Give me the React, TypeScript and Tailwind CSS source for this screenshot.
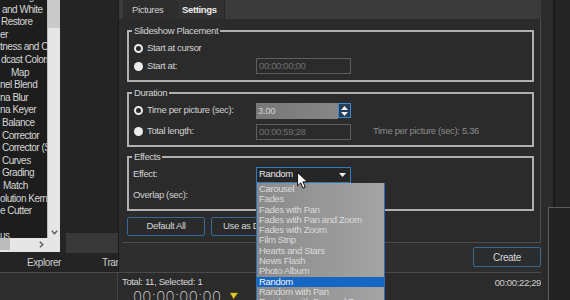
import React from "react";

const listRows: { t: string; c: string }[] = [
  { t: "ing", c: "pl-[22px]" },
  { t: "and White", c: "pl-[2px]" },
  { t: "Restore", c: "pl-[1px]" },
  { t: "er", c: "pl-0" },
  { t: "tness and Co", c: "pl-0" },
  { t: "dcast Colors", c: "pl-[1px]" },
  { t: "Map", c: "pl-[11px]" },
  { t: "nel Blend", c: "pl-0" },
  { t: "na Blur", c: "pl-0" },
  { t: "na Keyer", c: "pl-0" },
  { t: "Balance", c: "pl-[2px]" },
  { t: "Corrector", c: "pl-[2px]" },
  { t: "Corrector (S", c: "pl-[2px]" },
  { t: "Curves", c: "pl-[2px]" },
  { t: "Grading", c: "pl-[2px]" },
  { t: "Match", c: "pl-[3px]" },
  { t: "olution Kerne", c: "pl-0" },
  { t: "e Cutter", c: "pl-0" },
  { t: "", c: "pl-0" },
  { t: "us", c: "pl-0" },
];

const effects = [
  "Carousel",
  "Fades",
  "Fades with Pan",
  "Fades with Pan and Zoom",
  "Fades with Zoom",
  "Film Strip",
  "Hearts and Stars",
  "News Flash",
  "Photo Album",
  "Random",
  "Random with Pan",
  "Random with Pan and Zoom",
];

function Radio({ filled }: { filled: boolean }) {
  return filled ? (
    <span className="block w-[9px] h-[9px] shrink-0 rounded-full bg-[#ececec]" />
  ) : (
    <span className="block w-[9px] h-[9px] shrink-0 rounded-full border-2 border-[#ececec] bg-[#2b2b2b]" />
  );
}

function Group({
  title,
  extra,
  children,
}: {
  title: string;
  extra: string;
  children: React.ReactNode;
}) {
  return (
    <fieldset className={"ml-[5px] mr-[6px] border-2 border-[#b0b0b0] " + extra}>
      <legend className="ml-[3px] px-[2px] leading-[12px] text-[#d2d2d2] bg-[#2b2b2b]">
        {title}
      </legend>
      {children}
    </fieldset>
  );
}

export default function App() {
  return (
    <div className="w-[570px] h-[300px] bg-[#242424] overflow-hidden relative flex font-['Liberation_Sans',Arial,sans-serif] text-[9.5px] tracking-[-0.35px] text-[#d2d2d2]">
      {/* main column */}
      <div className="w-[541px] h-[300px] flex flex-col">
        {/* top */}
        <div className="h-[272px] flex">
          {/* left column */}
          <div className="w-[118px] flex flex-col">
            <div className="h-[252px] flex">
              {/* list frame */}
              <div className="w-[60px] h-[252px] bg-[#e4e4e4] flex flex-col">
                <div className="h-[238px] flex">
                  <div className="w-[47px] h-[238px] bg-[#1d1d1d] overflow-hidden">
                    <div className="mt-[-9px]">
                      {listRows.map((r, i) => (
                        <div
                          key={i}
                          className={"h-[12.6px] leading-[12.6px] whitespace-nowrap text-[10px] tracking-[-0.5px] text-[#d6d6d6] " + r.c}
                        >
                          {r.t}
                        </div>
                      ))}
                    </div>
                  </div>
                  <div className="w-[13px] flex flex-col border-l border-[#bdbdbd]">
                    <div className="h-[28px] bg-[#cacaca]" />
                    <div className="flex-1 bg-[#e6e6e6] flex flex-col justify-end items-center pb-[3px]">
                      <svg width="7" height="5" viewBox="0 0 7 5">
                        <path d="M0.8 0.8 L3.5 3.8 L6.2 0.8" stroke="#555" strokeWidth="1.3" fill="none" />
                      </svg>
                    </div>
                  </div>
                </div>
                <div className="h-[12px] flex items-center bg-[#e6e6e6]">
                  <div className="w-[10px] h-[12px] bg-[#bcbcbc]" />
                  <div className="ml-[29px]">
                    <svg width="5" height="7" viewBox="0 0 5 7">
                      <path d="M0.8 0.8 L3.8 3.5 L0.8 6.2" stroke="#555" strokeWidth="1.3" fill="none" />
                    </svg>
                  </div>
                </div>
                <div className="flex-1" />
              </div>
              {/* right of list */}
              <div className="w-[58px] flex flex-col justify-end">
                <div className="ml-[6px] h-[20px] mb-[-1px] bg-[#383838]" />
              </div>
            </div>
            <div className="h-[20px] flex items-center text-[10px] tracking-[-0.4px] text-[#cfcfcf] whitespace-nowrap overflow-hidden">
              <span className="ml-[27px]">Explorer</span>
              <span className="ml-[41px]">Tran</span>
            </div>
          </div>

          {/* dialog */}
          <div className="w-[423px] h-[272px] bg-[#2c2c2c] flex flex-col border-l border-[#1c1c1c]">
            {/* tab strip */}
            <div className="h-[19px] bg-[#3b3b3b] flex pl-[4px]">
              <div className="w-[55px] h-[19px] bg-[#2d2d2d] pl-[9px] leading-[19px] text-[#cfcfcf]">Pictures</div>
              <div className="w-[47px] h-[19px] bg-[#323232] pl-[4px] leading-[19px] font-bold text-[#ececec] border-r border-[#262626]">
                Settings
              </div>
            </div>
            {/* content panel */}
            <div className="h-[224px] ml-[3px] w-[419px] bg-[#2b2b2b] border-r border-b border-[#4c4c4c] flex flex-col">
              <Group title="Slideshow Placement" extra="mt-[6px] pt-[2px] pb-[5px]">
                <div className="h-[18px] flex items-center pl-[5px]">
                  <Radio filled={false} />
                  <span className="ml-[4px] w-[109px]">Start at cursor</span>
                </div>
                <div className="h-[18px] flex items-center pl-[5px]">
                  <Radio filled={true} />
                  <span className="ml-[4px] w-[109px]">Start at:</span>
                  <div className="w-[95px] h-[16px] border border-[#5e5e5e] bg-[#2b2b2b] pl-[2px] leading-[14px] text-[#707070]">
                    00:00:00;00
                  </div>
                </div>
              </Group>

              <Group title="Duration" extra="mt-[5px] pt-[1px] pb-[3px]">
                <div className="h-[21px] flex items-center pl-[5px]">
                  <Radio filled={false} />
                  <span className="ml-[4px] w-[109px]">Time per picture (sec):</span>
                  <div className="w-[82px] h-[16px] bg-gradient-to-r from-[#787878] to-[#868686] pl-[2px] leading-[16px] text-[#d4d4d4]">
                    3.00
                  </div>
                  <div className="w-[13px] h-[15px] border border-[#3d8bd0] bg-[#243d58] flex flex-col items-center justify-center gap-[2px]">
                    <svg width="7" height="4" viewBox="0 0 7 4">
                      <path d="M0 4 L3.5 0 L7 4 Z" fill="#f0f0f0" />
                    </svg>
                    <svg width="7" height="4" viewBox="0 0 7 4">
                      <path d="M0 0 L3.5 4 L7 0 Z" fill="#f0f0f0" />
                    </svg>
                  </div>
                </div>
                <div className="h-[21px] flex items-center pl-[5px]">
                  <Radio filled={true} />
                  <span className="ml-[4px] w-[109px]">Total length:</span>
                  <div className="w-[95px] h-[16px] border border-[#5e5e5e] bg-[#2b2b2b] pl-[2px] leading-[14px] text-[#707070]">
                    00:00:59;28
                  </div>
                  <span className="ml-[22px] text-[#8c8c8c]">Time per picture (sec): 5.36</span>
                </div>
              </Group>

              <Group title="Effects" extra="mt-[4px] pt-[1px] pb-[3px]">
                <div className="h-[21px] flex items-center pl-[4px]">
                  <span className="w-[123px]">Effect:</span>
                  <div className="w-[95px] h-[16px] border border-[#2f7bbd] bg-[#262626] pl-[2px] pr-[4px] flex items-center justify-between text-[#e6e6e6]">
                    <span>Random</span>
                    <svg width="7" height="4" viewBox="0 0 7 4">
                      <path d="M0 0 L3.5 4 L7 0 Z" fill="#f0f0f0" />
                    </svg>
                  </div>
                </div>
                <div className="h-[21px] flex items-center pl-[4px]">
                  <span>Overlap (sec):</span>
                </div>
              </Group>

              <div className="mt-[6px] ml-[5px] flex gap-[6px]">
                <div className="w-[78px] h-[19px] rounded-[2px] border border-[#34699a] bg-[#2a2a2a] flex items-center justify-center text-[#d6d6d6]">
                  Default All
                </div>
                <div className="w-[78px] h-[19px] rounded-[2px] border border-[#34699a] bg-[#2a2a2a] flex items-center justify-start pl-[11px] overflow-hidden whitespace-nowrap text-[#d6d6d6]">
                  Use as Default
                </div>
              </div>
            </div>
            {/* footer */}
            <div className="h-[29px] bg-[#2e2e2e] flex items-start justify-end pt-[4px] pr-0">
              <div className="w-[68px] h-[20px] rounded-[2px] border border-[#3a6a90] bg-[#2a2c2e] flex items-center justify-center text-[#d6d6d6] text-[10px]">
                Create
              </div>
            </div>
          </div>
        </div>

        {/* bottom status */}
        <div className="h-[28px] flex border-t border-[#4a4a4a] bg-[#2b2b2b]">
          <div className="w-[118px] bg-[#2e2e2e] border-r border-[#454545]" />
          <div className="flex-1 pl-[4px] flex flex-col overflow-hidden">
            <div className="h-[16px] leading-[16px] text-[#d6d6d6] pt-[1px]">Total: 11, Selected: 1</div>
            <div className="flex items-start">
              <span className="ml-[11px] font-['Inter',sans-serif] font-extralight text-[15px] leading-[16px] tracking-[0.3px] text-[#d8d8d8]">
                00:00:00;00
              </span>
              <svg className="ml-[8px] mt-[3px]" width="10" height="8" viewBox="0 0 10 8">
                <path d="M0.5 0.5 L9.5 0.5 L4.5 7.5 Z" fill="#e2c82a" stroke="#3a3210" strokeWidth="0.8" />
              </svg>
            </div>
          </div>
          <div className="pt-[4px] text-[#cfcfcf] leading-[12px]">00:00:22;29</div>
        </div>
      </div>

      {/* right strip */}
      <div className="w-[29px] h-[300px] flex flex-col">
        <div className="h-[207px] flex">
          <div className="w-[12px] bg-[#2c2c2c]" />
          <div className="w-[2px] bg-[#1a1a1a]" />
          <div className="flex-1 bg-[#252525]" />
        </div>
        <div className="flex-1 flex">
          <div className="w-[7px] bg-[#2b2b2b]" />
          <div className="flex-1 border-l border-t border-[#5e5e5e] bg-[#232323]" />
        </div>
      </div>

      {/* dropdown list overlay */}
      <div className="absolute left-[256px] top-[183px] w-[129px] h-[130px] border-x border-[#2c6fae] bg-gradient-to-r from-[#8a8a8a] to-[#a4a4a4] pt-[1px]">
        {effects.map((e) => (
          <div
            key={e}
            className={
              e === "Random"
                ? "h-[10.3px] leading-[10.3px] pl-[2px] whitespace-nowrap bg-[#1766c2] text-[#f4f4f4]"
                : "h-[10.3px] leading-[10.3px] pl-[2px] whitespace-nowrap text-[#dadada]"
            }
          >
            {e}
          </div>
        ))}
      </div>

      {/* mouse cursor */}
      <svg className="absolute left-[297px] top-[172px]" width="11" height="17" viewBox="0 0 12 19">
        <path
          d="M0.5 0.5 L0.5 15.5 L4 12 L6.5 18 L9 17 L6.5 11 L11.5 11 Z"
          fill="#ffffff"
          stroke="#000000"
          strokeWidth="1"
          strokeLinejoin="round"
        />
      </svg>
    </div>
  );
}
